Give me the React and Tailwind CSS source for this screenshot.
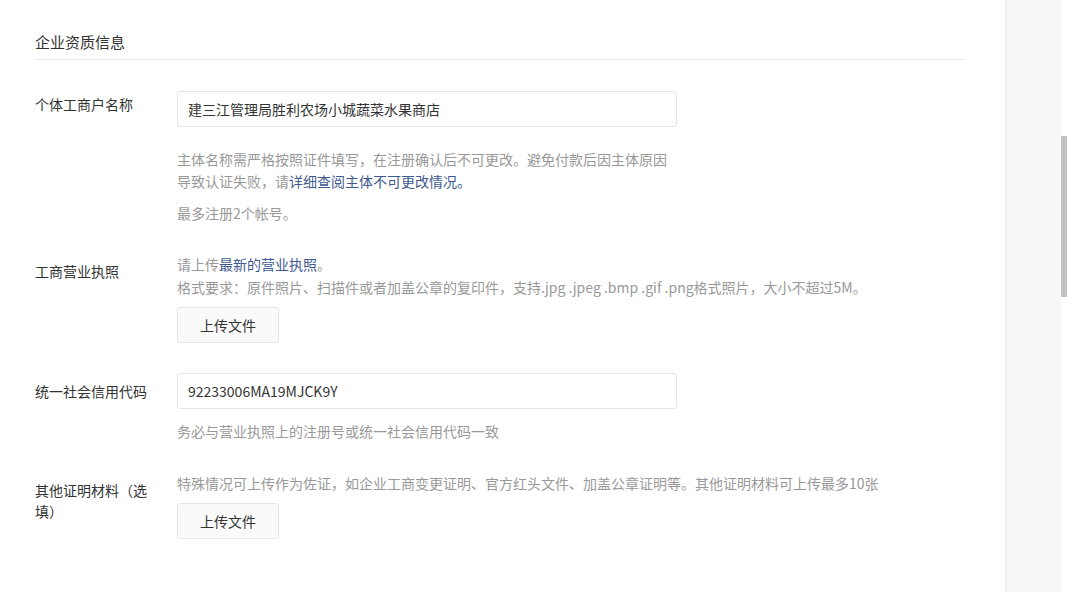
import React from 'react';

const font = { fontFamily: '"Noto Sans CJK SC", "Noto Sans", sans-serif' };

function UploadButton() {
  return (
    <button className="w-[102px] h-[36px] bg-[#fafafa] border border-[#e6e6e6] rounded-[3px] text-[14px] text-[#333]">
      上传文件
    </button>
  );
}

function TextInput({ value }) {
  return (
    <div className="w-[500px] h-[36px] border border-[#e6e6e6] rounded-[3px] bg-white flex items-center px-[10px] text-[14px] text-[#333]">
      {value}
    </div>
  );
}

export default function App() {
  return (
    <div className="w-full h-[592px] overflow-hidden flex bg-white" style={font}>
      {/* Main form */}
      <div className="flex-1 pl-[35px] pr-[40px]">
        <div className="pt-[32px] pb-[7px] border-b border-[#e8e8e8] text-[15px] leading-[20px] text-[#333]">
          企业资质信息
        </div>

        {/* 个体工商户名称 */}
        <div className="flex mt-[31px]">
          <div className="w-[142px] shrink-0 pt-[3px] text-[14px] leading-[20px] text-[#333]">个体工商户名称</div>
          <div>
            <TextInput value="建三江管理局胜利农场小城蔬菜水果商店" />
            <div className="mt-[21px] w-[500px] text-[14px] leading-[22px] text-[#999]">
              <div>主体名称需严格按照证件填写，在注册确认后不可更改。避免付款后因主体原因</div>
              <div>
                导致认证失败，请<span className="text-[#3e5a8e]">详细查阅主体不可更改情况。</span>
              </div>
            </div>
            <div className="mt-[10px] text-[14px] leading-[22px] text-[#999]">最多注册2个帐号。</div>
          </div>
        </div>

        {/* 工商营业执照 */}
        <div className="flex mt-[29px]">
          <div className="w-[142px] shrink-0 pt-[8px] text-[14px] leading-[20px] text-[#333]">工商营业执照</div>
          <div>
            <div className="text-[14px] leading-[23px] text-[#999]">
              请上传<span className="text-[#3e5a8e]">最新的营业执照</span>。
            </div>
            <div className="text-[14px] leading-[22px] text-[#999]">
              格式要求：原件照片、扫描件或者加盖公章的复印件，支持.jpg .jpeg .bmp .gif .png格式照片，大小不超过5M。
            </div>
            <div className="mt-[9px]">
              <UploadButton />
            </div>
          </div>
        </div>

        {/* 统一社会信用代码 */}
        <div className="flex mt-[30px]">
          <div className="w-[142px] shrink-0 pt-[8px] text-[14px] leading-[20px] text-[#333]">统一社会信用代码</div>
          <div>
            <TextInput value="92233006MA19MJCK9Y" />
            <div className="mt-[11px] text-[14px] leading-[22px] text-[#999]">务必与营业执照上的注册号或统一社会信用代码一致</div>
          </div>
        </div>

        {/* 其他证明材料 */}
        <div className="flex mt-[30px]">
          <div className="w-[142px] shrink-0 pt-[8px] pr-[22px] text-[14px] leading-[21px] text-[#333]">其他证明材料（选填）</div>
          <div>
            <div className="text-[14px] leading-[22px] text-[#999]">
              特殊情况可上传作为佐证，如企业工商变更证明、官方红头文件、加盖公章证明等。其他证明材料可上传最多10张
            </div>
            <div className="mt-[9px]">
              <UploadButton />
            </div>
          </div>
        </div>
      </div>

      {/* Side panel */}
      <div className="w-[56px] shrink-0 bg-[#f6f7f9] shadow-[inset_2px_0_3px_rgba(0,0,0,0.03)]" />

      {/* Scrollbar */}
      <div className="w-[6px] shrink-0 bg-white flex flex-col">
        <div className="mt-[136px] h-[161px] bg-[#c1c1c1]" />
      </div>
    </div>
  );
}
